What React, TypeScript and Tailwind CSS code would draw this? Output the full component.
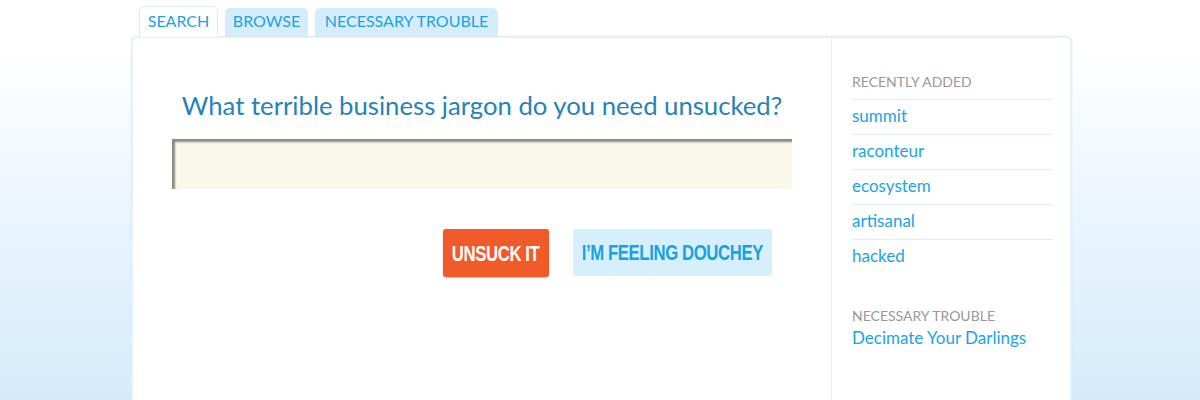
import React from "react";

const recent = ["summit", "raconteur", "ecosystem", "artisanal", "hacked"];

const narrow = { fontFamily: "'Liberation Sans', Arial, sans-serif" };

export default function App() {
    return (
        <div
            className="w-[1200px] h-[400px] overflow-hidden bg-gradient-to-b from-white from-[12%] to-[#d4ebfb]"
            style={{ fontFamily: "Lato, 'Open Sans', sans-serif" }}
        >
            <div className="ml-[131px] w-[941px] pt-[6px]">
                {/* Tabs */}
                <div className="flex gap-[7px] pl-[8px] h-[31px] items-end relative z-10">
                    <div className="h-[31px] w-[79px] text-center pt-[2px] bg-white rounded-t-[5px] border border-b-0 border-[#dcedf8] text-[#1ba4e4] text-[16px]">
                        SEARCH
                    </div>
                    <div className="h-[29px] w-[83px] text-center pt-[1px] bg-[#d5ecfb] rounded-t-[5px] text-[#1ba4e4] text-[16px]">
                        BROWSE
                    </div>
                    <div className="h-[29px] w-[183px] text-center pt-[1px] bg-[#d5ecfb] rounded-t-[5px] text-[#1ba4e4] text-[16px]">
                        NECESSARY TROUBLE
                    </div>
                </div>

                {/* Card */}
                <div className="-mt-px flex h-[400px] bg-white rounded-[6px] border-2 border-[#e3f1fa] shadow-[0_0_2px_#d4eaf8]">
                    <div className="w-[698px] flex flex-col items-center">
                        <h1 className="mt-[51px] text-[25.7px] leading-[32px] text-[#2583b5] whitespace-nowrap">
                            What terrible business jargon do you need unsucked?
                        </h1>
                        <div className="mt-[18px] w-[620px] h-[50px] bg-[#faf8e8] shadow-[inset_3px_3px_2px_#8f8987]" />
                        <div className="mt-[40px] self-end mr-[59px] flex gap-[24px]">
                            <button
                                className="h-[48px] w-[106px] flex items-center justify-center rounded-[3px] bg-[#f15b2a] text-white text-[22px] font-bold shadow-[0_1px_2px_rgba(0,0,0,0.25)] whitespace-nowrap"
                                style={narrow}
                            >
                                <span className="inline-block shrink-0 scale-x-[0.76] tracking-[-0.5px]">UNSUCK IT</span>
                            </button>
                            <button
                                className="h-[47px] w-[199px] flex items-center justify-center rounded-[3px] bg-[#d5effc] text-[#16a2e3] text-[22px] font-bold whitespace-nowrap"
                                style={narrow}
                            >
                                <span className="inline-block shrink-0 scale-x-[0.76] tracking-[-0.5px]">I’M FEELING DOUCHEY</span>
                            </button>
                        </div>
                    </div>

                    <div className="flex-1 border-l border-[#e3eef5] pl-[20px] pr-[18px] pt-[36px]">
                        <div className="text-[14px] text-[#9a9898] leading-[16px] pb-[9px] border-b border-[#dcedf8]">
                            RECENTLY ADDED
                        </div>
                        {recent.map((w, i) => (
                            <div
                                key={w}
                                className={`text-[17px] text-[#1ba4e4] h-[35px] leading-[32px] ${i < recent.length - 1 ? "border-b border-[#dcedf8]" : ""}`}
                            >
                                {w}
                            </div>
                        ))}
                        <div className="mt-[33px] text-[14px] text-[#9a9898] leading-[16px]">
                            NECESSARY TROUBLE
                        </div>
                        <div className="mt-[3px] text-[17px] text-[#1ba4e4] leading-[22px]">
                            Decimate Your Darlings
                        </div>
                    </div>
                </div>
            </div>
        </div>
    );
}
